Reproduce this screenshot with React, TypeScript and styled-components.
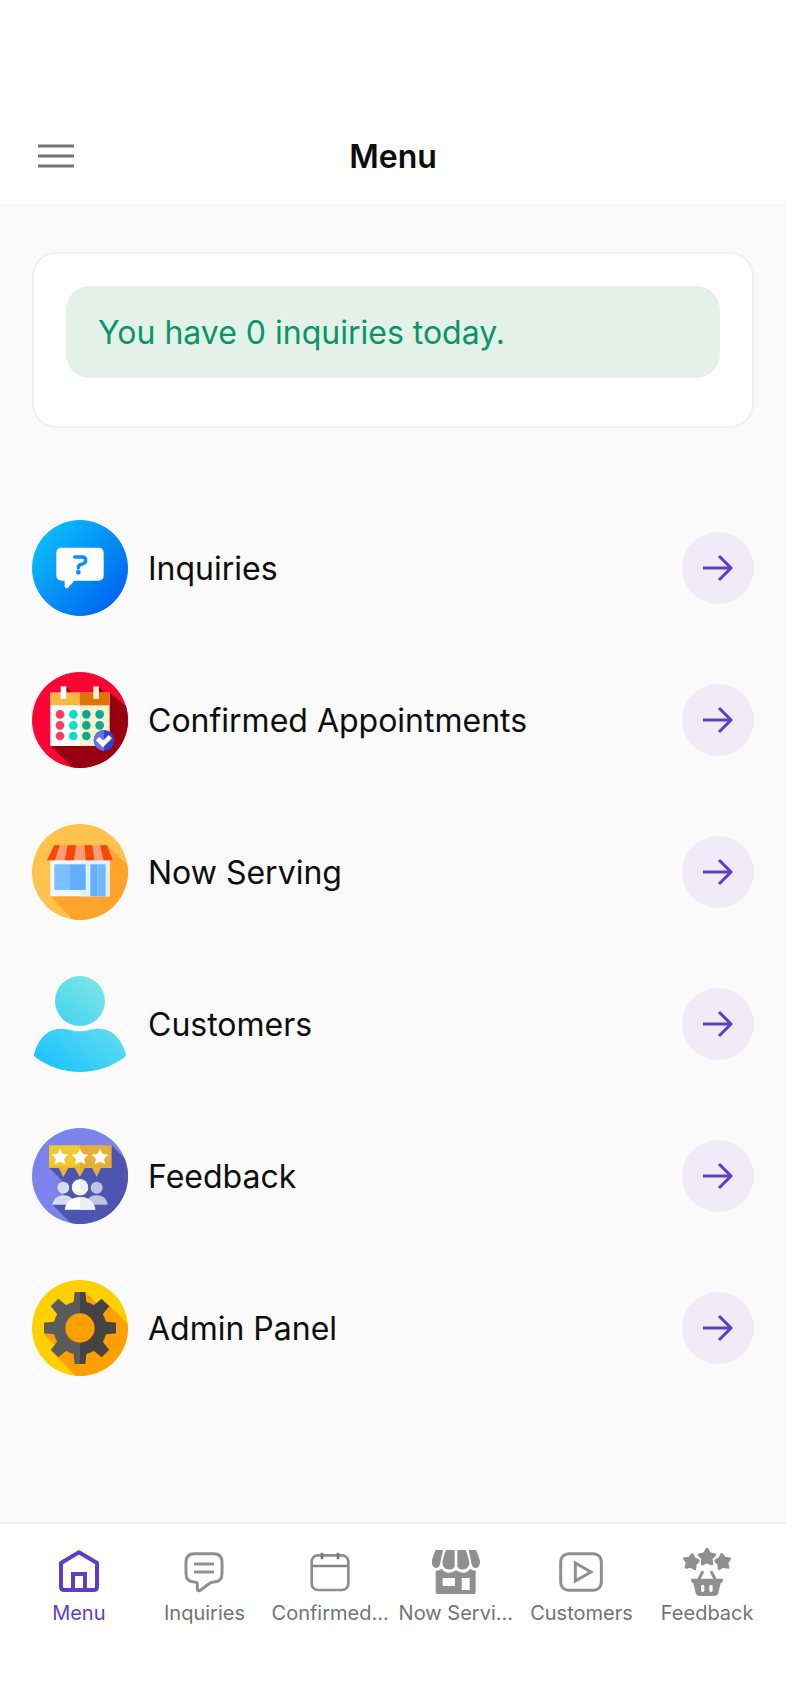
import React from 'react';
import styled, { createGlobalStyle } from 'styled-components';

const GlobalStyle = createGlobalStyle`
  *, *::before, *::after { box-sizing: border-box; }
  body {
    margin: 0;
    background: #fafafa;
    color: #0d0d0d;
    font-family: Inter, 'Liberation Sans', sans-serif;
  }
`;

const Screen = styled.div`
  display: flex;
  flex-direction: column;
  min-height: 100vh;
`;

const Header = styled.header`
  display: grid;
  grid-template-columns: 48px 1fr 48px;
  align-items: center;
  padding: 108px 32px 0;
  background: #ffffff;
`;

const MenuButton = styled.button`
  display: flex;
  width: 48px;
  height: 96px;
  align-items: center;
  padding: 0;
  border: 0;
  background: none;
  cursor: pointer;
`;

const Title = styled.h1`
  margin: 0;
  padding-top: 2px;
  font-size: 32px;
  font-weight: 600;
  line-height: 40px;
  text-align: center;
`;

const Main = styled.main`
  flex: 1;
  padding: 48px 32px;
`;

const Card = styled.section`
  padding: 32px 32px 48px;
  border: 2px solid #f0f0f0;
  border-radius: 24px;
  background: #ffffff;
`;

const Notice = styled.p`
  margin: 0;
  padding: 27px 32px 25px;
  border-radius: 24px;
  background: #e4f1e8;
  color: #069668;
  font-size: 32px;
  line-height: 40px;
`;

const List = styled.ul`
  display: flex;
  flex-direction: column;
  gap: 56px;
  margin: 92px 0 0;
  padding: 0;
  list-style: none;
`;

const RowLink = styled.a`
  display: flex;
  align-items: center;
  gap: 20px;
  color: inherit;
  text-decoration: none;
`;

const RowLabel = styled.span`
  flex: 1;
  padding-top: 2px;
  font-size: 32px;
  line-height: 40px;
`;

const Arrow = styled.span`
  display: flex;
  align-items: center;
  justify-content: center;
  width: 72px;
  height: 72px;
  border-radius: 50%;
  background: #efecf7;
`;

const RowIcon = styled.svg`
  flex: none;
  width: 96px;
  height: 96px;
`;

const TabBar = styled.nav`
  display: grid;
  grid-template-columns: repeat(6, minmax(0, 1fr));
  padding: 24px 16px 79px;
  border-top: 2px solid #eeeeee;
  background: #ffffff;
`;

const Tab = styled.a<{ $active?: boolean }>`
  display: flex;
  flex-direction: column;
  align-items: center;
  gap: 5px;
  color: ${(p) => (p.$active ? '#5f3dc4' : '#737373')};
  font-size: 20px;
  line-height: 24px;
  text-decoration: none;
  white-space: nowrap;
`;

const TabIcon = styled.svg`
  width: 48px;
  height: 48px;
`;

const starPoints = (cx: number, cy: number, r: number, inner = 0.5) =>
  Array.from({ length: 10 }, (_, i) => {
    const a = (Math.PI / 5) * i - Math.PI / 2;
    const d = i % 2 ? r * inner : r;
    return `${(cx + d * Math.cos(a)).toFixed(1)},${(cy + d * Math.sin(a)).toFixed(1)}`;
  }).join(' ');

const InquiriesIcon = () => (
  <RowIcon viewBox="36 30 288 288" aria-hidden="true">
    <defs>
      <linearGradient id="inq" x1="0.1" y1="0.15" x2="0.85" y2="0.85">
        <stop offset="0" stopColor="#0bbcfb" />
        <stop offset="1" stopColor="#0068f0" />
      </linearGradient>
    </defs>
    <circle cx="180" cy="174" r="144" fill="url(#inq)" />
    <path
      d="M126 113H235Q251 113 251 129V196Q251 212 235 212H163L144 233Q140 237 136 234Q134 232 134 228V212H126Q109 212 109 196V129Q109 113 126 113Z"
      fill="#fff"
    />
    <path d="M164 141H187Q197 141 197 151Q197 160 187 162Q175 163 175 174" fill="none" stroke="#0a90f6" strokeWidth="10" strokeLinecap="round" />
    <circle cx="175" cy="187" r="7" fill="#0a90f6" />
  </RowIcon>
);

const CalendarIcon = () => (
  <RowIcon viewBox="36 36 288 288" aria-hidden="true">
    <clipPath id="cal"><circle cx="180" cy="180" r="144" /></clipPath>
    <g clipPath="url(#cal)">
      <rect x="36" y="36" width="288" height="288" fill="#ff0335" />
      <path d="M92 257L160 325H330V147L269 98Z" fill="#99000f" />
    </g>
    <path d="M139 81L156 98H139ZM237 81L254 98H237Z" fill="#99000f" />
    <rect x="91" y="98" width="89" height="160" fill="#fff" />
    <rect x="180" y="98" width="89" height="160" fill="#fcf0cc" />
    <rect x="91" y="98" width="89" height="38" fill="#ffb640" />
    <rect x="180" y="98" width="89" height="38" fill="#e07305" />
    <rect x="122" y="79" width="17" height="38" fill="#fff" />
    <rect x="220" y="79" width="17" height="38" fill="#fcf0cc" />
    {[163, 196, 228].map((y) =>
      [120, 160, 199, 239].map((x, i) => (
        <circle key={`${x}-${y}`} cx={x} cy={y} r="13" fill={['#fc3b63', '#0adfc3', '#04ac93', '#04ac93'][i]} />
      )),
    )}
    <circle cx="252" cy="241" r="31" fill="#2b43d8" />
    <path d="M252 210A31 31 0 0 0 252 272Z" fill="#6474e8" />
    <path d="M228 241L238 231L249 242L266 225L276 235L249 262Z" fill="#fcf3d8" />
    <path d="M228 241L238 231L249 242L252 239V259L249 262Z" fill="#fff" />
  </RowIcon>
);

const StoreIcon = () => (
  <RowIcon viewBox="36 27 288 288" aria-hidden="true">
    <clipPath id="store"><circle cx="180" cy="171" r="144" /></clipPath>
    <g clipPath="url(#store)">
      <rect x="36" y="27" width="288" height="288" fill="#ffc24d" />
      <path d="M91 244L162 318H330V158L261 91Z" fill="#ffa42b" />
    </g>
    <rect x="91" y="130" width="178" height="114" fill="#eef7fb" />
    <rect x="180" y="130" width="89" height="114" fill="#e0f0f9" />
    <rect x="103" y="148" width="47" height="77" fill="#7dc0ff" />
    <rect x="150" y="148" width="47" height="77" fill="#62aefc" />
    <rect x="211" y="148" width="22" height="96" fill="#64b0fd" />
    <rect x="233" y="148" width="24" height="96" fill="#72b8fd" />
    <path d="M103 91H261L278 136H81Z" fill="#ff9a76" />
    <path d="M103 91H119L105 136H81ZM143 91H168L162 136H134ZM194 91H217L223 136H197ZM240 91H261L278 136H251Z" fill="#f44904" />
  </RowIcon>
);

const CustomerIcon = () => (
  <RowIcon viewBox="36 33 288 288" aria-hidden="true">
    <defs>
      <linearGradient id="cust" gradientUnits="userSpaceOnUse" x1="80" y1="290" x2="250" y2="70">
        <stop offset="0" stopColor="#20c5fc" />
        <stop offset="1" stopColor="#79e5e6" />
      </linearGradient>
    </defs>
    <circle cx="180" cy="108" r="75" fill="url(#cust)" />
    <path d="M44 262C56 219 85 191 121 191C150 191 155 199 180 199C205 199 210 191 239 191C274 191 304 219 316 262Q321 271 314 277C274 306 228 321 180 321C132 321 86 306 46 277Q39 271 44 262Z" fill="url(#cust)" />
  </RowIcon>
);

const FeedbackIcon = () => (
  <RowIcon viewBox="36 39 288 288" aria-hidden="true">
    <clipPath id="feed"><circle cx="180" cy="183" r="144" /></clipPath>
    <g clipPath="url(#feed)">
      <rect x="36" y="39" width="288" height="288" fill="#7b83ed" />
      <path d="M88 159L130 201V245L98 269L158 330H330V146L275 91Z" fill="#4d55b0" />
    </g>
    <path d="M87 91H180V185L165 159H144L130 185L117 159H87Z" fill="#f1ca30" />
    <path d="M180 91H275V159H243L230 185L216 159H195L180 185Z" fill="#e5ae34" />
    <path d="M87 153H180V159H87ZM117 159H144L130 185ZM165 159H180V185Z" fill="#e9b72c" />
    {[120, 180, 240].map((x) => (
      <polygon key={x} points={starPoints(x, 127, 26)} fill="#fff" />
    ))}
    <circle cx="130" cy="218" r="18" fill="#d9dcec" />
    <path d="M97 269C101 248 118 241 131 241C148 241 160 250 163 269Z" fill="#d9dcec" />
    <circle cx="230" cy="218" r="18" fill="#bfc4df" />
    <path d="M197 269C201 248 216 241 229 241C248 241 260 250 263 269Z" fill="#bfc4df" />
    <path d="M134 284C138 257 158 246 180 246C202 246 222 257 226 284Z" fill="#fff" />
    <path d="M180 246C202 246 222 257 226 284H180Z" fill="#eeeef5" />
    <circle cx="180" cy="217" r="26" fill="#fff" stroke="#4d55b0" strokeWidth="3" />
    <path d="M180 193A24 24 0 0 1 180 241Z" fill="#eeeef5" />
  </RowIcon>
);

const toothPath = 'M154 102Q160 100 161 94L164 66H196L199 94Q200 100 206 102Z';

const AdminIcon = () => (
  <RowIcon viewBox="36 30 288 288" aria-hidden="true">
    <clipPath id="adm"><circle cx="180" cy="174" r="144" /></clipPath>
    <clipPath id="admLeft"><rect x="60" y="50" width="120" height="250" /></clipPath>
    <clipPath id="admRight"><rect x="180" y="50" width="120" height="250" /></clipPath>
    <g clipPath="url(#adm)">
      <rect x="36" y="30" width="288" height="288" fill="#ffd000" />
      <path d="M72 192L92 212L108 228L91 239L170 322H330V168L264 102L240 110L198 68Z" fill="#ffa000" />
    </g>
    {[
      ['admLeft', '#5b5b5b'],
      ['admRight', '#444444'],
    ].map(([clip, fill]) => (
      <g key={clip} clipPath={`url(#${clip})`} fill={fill}>
        <circle cx="180" cy="174" r="80" />
        {[0, 45, 90, 135, 180, 225, 270, 315].map((a) => (
          <path key={a} d={toothPath} transform={`rotate(${a} 180 174)`} />
        ))}
      </g>
    ))}
    <circle cx="180" cy="174" r="44" fill="#ffa000" />
  </RowIcon>
);

const ArrowIcon = () => (
  <svg width="36" height="36" viewBox="0 0 36 36" fill="none" stroke="#5f3dc4" strokeWidth="3" aria-hidden="true">
    <path d="M3 18H30M19 6L31 18L19 30" />
  </svg>
);

const HomeTabIcon = () => (
  <TabIcon viewBox="162 114 144 144" fill="none" stroke="#5f3dc4" strokeWidth="12" aria-hidden="true">
    <path d="M180 159L234 127L288 159V230Q288 240 278 240H190Q180 240 180 230Z" strokeLinejoin="round" />
    <path d="M216 240V192H252V240" />
  </TabIcon>
);

const InquiriesTabIcon = () => (
  <TabIcon viewBox="540 114 144 144" fill="none" stroke="#8f8f8f" strokeWidth="9" aria-hidden="true">
    <path d="M583 131H641Q666 131 666 156V191Q666 215 641 216Q632 217 626 222L602 240Q596 245 592 239V222Q591 216 583 216Q558 215 558 191V156Q558 131 583 131Z" />
    <path d="M582 162H642M582 186H642" />
  </TabIcon>
);

const CalendarTabIcon = () => (
  <TabIcon viewBox="918 114 144 144" fill="none" stroke="#8f8f8f" strokeWidth="8" aria-hidden="true">
    <rect x="935" y="136" width="110" height="104" rx="19" />
    <path d="M935 168H1045" stroke="#858585" />
    <path d="M966 128V148M1014 128V148" stroke="#77797b" />
  </TabIcon>
);

const StoreTabIcon = () => (
  <TabIcon viewBox="118 114 144 144" fill="#8f8f8f" aria-hidden="true">
    <path d="M129 120H151L142 163Q138 176 127 174Q117 169 117 155Q118 145 129 120ZM160 120H186V170Q180 181 166 178Q150 176 149 158Q150 146 160 120ZM194 120H219Q229 146 230 158Q229 176 214 178Q201 181 194 170ZM228 120H250Q261 145 262 155Q262 169 252 174Q241 176 237 163Z" />
    <path fillRule="evenodd" d="M129 182Q140 182 147 176Q153 187 170 188Q181 188 190 181Q200 188 211 188Q226 187 232 176Q239 182 249 182V246Q249 252 243 252H135Q129 252 129 246ZM150 204V228H187V204ZM207 204V240H231V204Z" />
  </TabIcon>
);

const PlayTabIcon = () => (
  <TabIcon viewBox="495 114 144 144" fill="none" stroke="#8f8f8f" strokeWidth="9" aria-hidden="true">
    <rect x="506" y="131" width="122" height="110" rx="24" />
    <path d="M550 159V213L597 186Z" />
  </TabIcon>
);

const FeedbackTabIcon = () => (
  <TabIcon viewBox="873 114 144 144" fill="#8f8f8f" stroke="#8f8f8f" strokeLinejoin="round" aria-hidden="true">
    <g strokeWidth="8">
      <polygon points={starPoints(898, 156, 23, 0.58)} transform="rotate(8 898 156)" />
      <polygon points={starPoints(992, 156, 23, 0.58)} transform="rotate(-8 992 156)" />
      <polygon points={starPoints(945, 142, 25, 0.55)} stroke="#fff" strokeWidth="17" />
      <polygon points={starPoints(945, 142, 25, 0.55)} />
    </g>
    <path d="M931 187L921 207M959 187L969 207" strokeWidth="9" strokeLinecap="round" />
    <path stroke="none" fillRule="evenodd" d="M900 206H990Q993 206 993 212Q993 217 986 219L979 249Q976 258 967 258H923Q914 258 911 249L904 219Q897 217 897 212Q897 206 900 206ZM932 224Q927 224 927 229V241Q927 246 932 246Q937 246 937 241V229Q937 224 932 224ZM957 224Q952 224 952 229V241Q952 246 957 246Q962 246 962 241V229Q962 224 957 224Z" />
  </TabIcon>
);

const rows = [
  { label: 'Inquiries', href: '#inquiries', Icon: InquiriesIcon },
  { label: 'Confirmed Appointments', href: '#appointments', Icon: CalendarIcon },
  { label: 'Now Serving', href: '#serving', Icon: StoreIcon },
  { label: 'Customers', href: '#customers', Icon: CustomerIcon },
  { label: 'Feedback', href: '#feedback', Icon: FeedbackIcon },
  { label: 'Admin Panel', href: '#admin', Icon: AdminIcon },
];

const tabs = [
  { label: 'Menu', href: '#menu', Icon: HomeTabIcon },
  { label: 'Inquiries', href: '#inquiries', Icon: InquiriesTabIcon },
  { label: 'Confirmed...', href: '#appointments', Icon: CalendarTabIcon },
  { label: 'Now Servi...', href: '#serving', Icon: StoreTabIcon },
  { label: 'Customers', href: '#customers', Icon: PlayTabIcon },
  { label: 'Feedback', href: '#feedback', Icon: FeedbackTabIcon },
];

export default function App() {
  return (
    <>
      <GlobalStyle />
      <Screen>
        <Header>
          <MenuButton type="button" aria-label="Open menu">
            <svg width="48" height="48" viewBox="0 0 48 48" stroke="#737373" strokeWidth="3" aria-hidden="true">
              <path d="M6 14H42M6 24H42M6 34H42" />
            </svg>
          </MenuButton>
          <Title>Menu</Title>
        </Header>
        <Main>
          <Card>
            <Notice>You have 0 inquiries today.</Notice>
          </Card>
          <List>
            {rows.map(({ label, href, Icon }) => (
              <li key={label}>
                <RowLink href={href}>
                  <Icon />
                  <RowLabel>{label}</RowLabel>
                  <Arrow>
                    <ArrowIcon />
                  </Arrow>
                </RowLink>
              </li>
            ))}
          </List>
        </Main>
        <TabBar aria-label="Main">
          {tabs.map(({ label, href, Icon }, i) => (
            <Tab key={label} href={href} $active={i === 0} aria-current={i === 0 ? 'page' : undefined}>
              <Icon />
              <span>{label}</span>
            </Tab>
          ))}
        </TabBar>
      </Screen>
    </>
  );
}
